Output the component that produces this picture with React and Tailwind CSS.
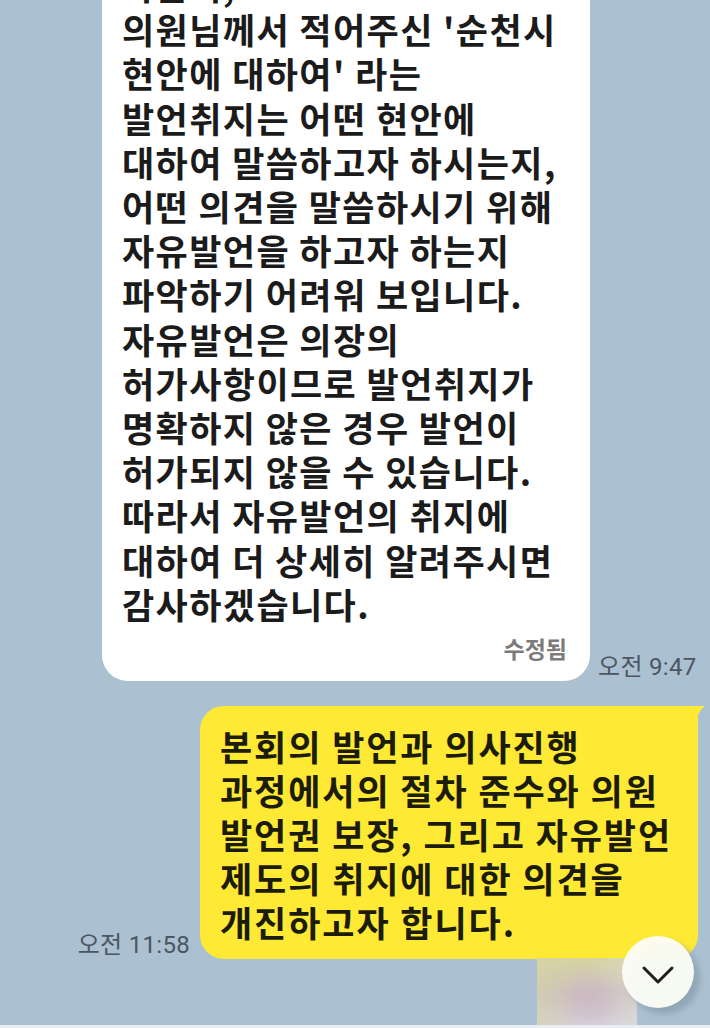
import React from "react";

const whiteLines = [
  "아울러,",
  "의원님께서 적어주신 '순천시",
  "현안에 대하여' 라는",
  "발언취지는 어떤 현안에",
  "대하여 말씀하고자 하시는지,",
  "어떤 의견을 말씀하시기 위해",
  "자유발언을 하고자 하는지",
  "파악하기 어려워 보입니다.",
  "자유발언은 의장의",
  "허가사항이므로 발언취지가",
  "명확하지 않은 경우 발언이",
  "허가되지 않을 수 있습니다.",
  "따라서 자유발언의 취지에",
  "대하여 더 상세히 알려주시면",
  "감사하겠습니다.",
];

const yellowLines = [
  "본회의 발언과 의사진행",
  "과정에서의 절차 준수와 의원",
  "발언권 보장, 그리고 자유발언",
  "제도의 취지에 대한 의견을",
  "개진하고자 합니다.",
];

export default function App() {
  return (
    <div
      className="relative w-[710px] h-[1028px] overflow-hidden bg-[#abc1d1]"
      style={{ fontFamily: '"Noto Sans CJK KR", "Noto Sans", sans-serif' }}
    >
      <div className="flex flex-col">
        <div className="flex items-end gap-[8px] pl-[102px] -mt-[37px]">
          <div className="w-[488px] bg-white rounded-b-[26px] pl-[20px] pr-[23px] pb-[18px]">
            <div className="text-[35px] leading-[44.2px] font-bold tracking-[1.4px] text-[#1b1b1b] whitespace-nowrap">
              {whiteLines.map((l, i) => (
                <div key={i}>{l}</div>
              ))}
            </div>
            <div className="mt-[7px] h-[30px] leading-[30px] text-right text-[23px] font-bold text-[#7b7b7b]">
              수정됨
            </div>
          </div>
          <span
            className="text-[24px] leading-[28px] tracking-[0.3px] text-[#4b5661] whitespace-nowrap"
            style={{ fontFamily: 'Roboto, "Noto Sans CJK KR", sans-serif' }}
          >
            오전 9:47
          </span>
        </div>

        <div className="mt-[25px] flex items-end justify-end gap-[10px] pr-[12px]">
          <span
            className="text-[24px] leading-[28px] tracking-[0.3px] text-[#4b5661] whitespace-nowrap"
            style={{ fontFamily: 'Roboto, "Noto Sans CJK KR", sans-serif' }}
          >
            오전 11:58
          </span>
          <div className="relative w-[498px] bg-[#fee934] rounded-[24px] rounded-tr-[2px] pl-[20px] pt-[18px] pb-[15px]">
            <svg
              className="absolute -right-[7px] top-0"
              width="10"
              height="18"
              viewBox="0 0 10 18"
            >
              <path d="M0 0 L10 0 Q3 5 0 18 Z" fill="#fee934" />
            </svg>
            <div className="text-[35px] leading-[44px] font-bold tracking-[1.9px] text-[#1c1c0c] whitespace-nowrap">
              {yellowLines.map((l, i) => (
                <div key={i}>{l}</div>
              ))}
            </div>
          </div>
        </div>
      </div>

      {/* blurred sticker preview */}
      <div className="absolute left-[537px] top-[958px] w-[100px] h-[70px] overflow-hidden bg-gradient-to-b from-[#d8d59e] via-[#cdc1c4] to-[#d8d6e3]">
        <div className="absolute inset-0 bg-gradient-to-r from-[#d6d2a4]/60 via-transparent to-[#dfdfcf]/50" />
        <div className="absolute left-[28px] top-[24px] w-[50px] h-[36px] rounded-full bg-[#cab3bf]/70 blur-[12px]" />
      </div>

      {/* scroll down button */}
      <div className="absolute left-[628px] top-[942px] w-[72px] h-[72px] rounded-full bg-[#7f93a3]/60 blur-[3px]" />
      <div className="absolute left-[622px] top-[936px] w-[72px] h-[72px] rounded-full bg-[#fdfdf7]/95 flex items-center justify-center">
        <svg width="34" height="20" viewBox="0 0 34 20" className="mt-[6px]">
          <path
            d="M3 3 L17 17 L31 3"
            fill="none"
            stroke="#1f1f1f"
            strokeWidth="3"
            strokeLinecap="round"
            strokeLinejoin="round"
          />
        </svg>
      </div>

      {/* bottom input bar edge */}
      <div className="absolute left-0 right-0 bottom-0 h-[3px] bg-[#e9eef2]" />
    </div>
  );
}
